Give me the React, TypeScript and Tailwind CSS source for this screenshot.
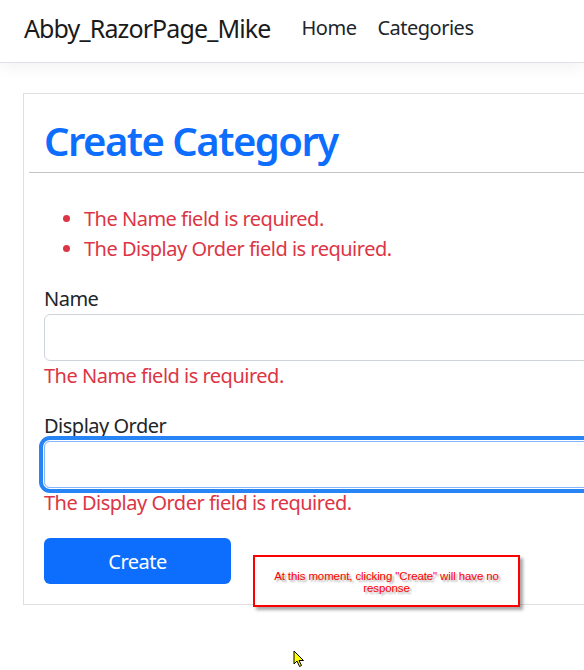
export default function App() {
  return (
    <div className="relative h-[670px] w-[584px] overflow-hidden bg-white font-['Noto_Sans',sans-serif] text-[20px] leading-[30px] tracking-[-0.025em] text-[#212529]">
      {/* navbar */}
      <nav className="flex h-[63px] w-[584px] items-center border-b border-[#dee2e6] bg-white px-6 pb-[6px] shadow-[0_5px_15px_rgba(0,0,0,0.05)]">
        <span className="mr-[31px] text-[25px] leading-[38px] tracking-[-0.035em] text-[#1a1a1a]">Abby_RazorPage_Mike</span>
        <a className="mr-[21px]">Home</a>
        <a>Categories</a>
      </nav>

      <div className="pl-[23px] pt-[30px]">
        <div className="w-[760px] border border-[#dfdfdf] px-5 pb-5 pt-[23px]">
          <h1 className="text-[40px] leading-[48px] font-semibold tracking-[-0.038em] text-[#0d6efd]">Create Category</h1>
          <hr className="-ml-[15px] mt-[7px] border-t border-[#c4c4c4]" />

          <ul className="mt-[31px] mb-5 list-disc pl-10 text-[#dc3545] marker:text-[#dc3545]">
            <li>The Name field is required.</li>
            <li>The Display Order field is required.</li>
          </ul>

          <div className="mb-5 flex flex-col">
            <label>Name</label>
            <input className="h-[47px] w-full rounded-[6px] border border-[#ced4da] px-3 outline-none" />
            <span className="text-[#dc3545]">The Name field is required.</span>
          </div>

          <div className="mb-5 flex flex-col">
            <label>Display Order</label>
            <input className="h-[47px] w-full rounded-[6px] border border-[#86b7fe] px-3 outline-none shadow-[0_0_0_1px_#ffffff,0_0_0_5px_#2684f5]" />
            <span className="text-[#dc3545]">The Display Order field is required.</span>
          </div>

          <button className="h-[46px] w-[187px] rounded-[6px] bg-[#0d6efd] pt-[2px] text-white">Create</button>
        </div>
      </div>

      {/* annotation */}
      <div className="absolute left-[253px] top-[555px] flex h-[52px] w-[267px] flex-col items-center justify-center border-2 border-[#ff0000] bg-white pt-[1px] font-['Liberation_Sans',sans-serif] text-[11.5px] leading-[12px] tracking-[-0.01em] text-[#ff0000] shadow-[3px_3px_3px_rgba(0,0,0,0.35)] [text-shadow:2px_2px_2px_rgba(0,0,0,0.35)]">
        <span>At this moment, clicking "Create" will have no</span>
        <span>response</span>
      </div>

      {/* cursor */}
      <svg className="absolute left-[293px] top-[650px]" width="12" height="18" viewBox="0 0 12 18">
        <path d="M1 1 L1 14 L4 11 L6.5 16.5 L8.5 15.5 L6 10.5 L10.5 10.5 Z" fill="#ffff00" stroke="#000" strokeWidth="1" strokeLinejoin="round" />
      </svg>
    </div>
  )
}
